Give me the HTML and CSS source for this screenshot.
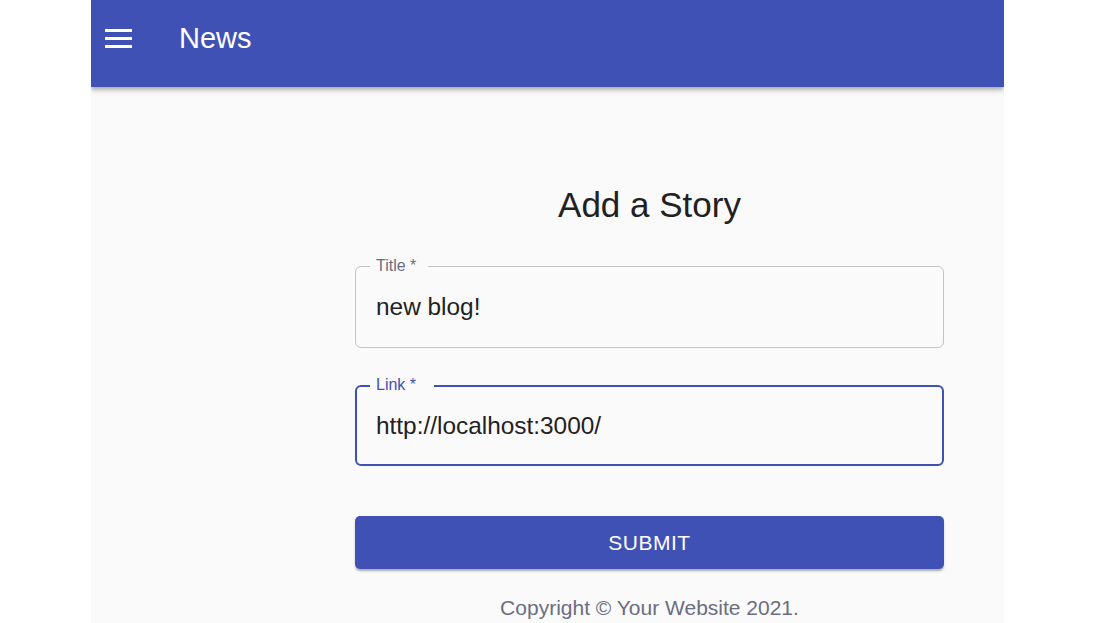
FILE: index.html
```html
<!DOCTYPE html>
<html>
<head>
<meta charset="utf-8">
<link rel="stylesheet" href="styles.css">
</head>
<body>
<div class="frame">
  <header class="appbar">
    <svg class="menu" viewBox="0 0 27 20" width="27" height="20">
      <rect x="0" y="1" width="27" height="3" fill="#fff"/>
      <rect x="0" y="9" width="27" height="3" fill="#fff"/>
      <rect x="0" y="17" width="27" height="3" fill="#fff"/>
    </svg>
    <span class="brand">News</span>
  </header>
  <main class="main">
    <h1 class="heading">Add a Story</h1>
    <div class="field">
      <span class="legend">Title *</span>
      <div class="value">new blog!</div>
    </div>
    <div class="field focused">
      <span class="legend">Link *</span>
      <div class="value">http://localhost:3000/</div>
    </div>
    <button class="submit">SUBMIT</button>
    <p class="copy">Copyright © Your Website 2021.</p>
  </main>
</div>
</body>
</html>
```
FILE: styles.css
```css
html, body {
  margin: 0;
  padding: 0;
  background: #ffffff;
  font-family: "Liberation Sans", Arial, sans-serif;
}
.frame {
  margin-left: 91px;
  width: 913px;
  height: 623px;
  background: #fafafa;
  overflow: hidden;
}
.appbar {
  height: 87px;
  background: #3f51b5;
  display: flex;
  align-items: center;
  padding-left: 14px;
  padding-bottom: 11px;
  box-sizing: border-box;
  box-shadow: 0 2px 4px rgba(0,0,0,0.25), 0 4px 6px rgba(0,0,0,0.12);
  position: relative;
}
.menu {
  display: block;
}
.brand {
  color: #fff;
  font-size: 29px;
  margin-left: 47px;
}
.main {
  margin-left: 264px;
  width: 589px;
  display: flex;
  flex-direction: column;
}
.heading {
  margin: 98px 0 0 0;
  font-weight: 400;
  font-size: 35px;
  line-height: 40px;
  text-align: center;
  color: #212121;
}
.field {
  position: relative;
  margin-top: 41px;
  border: 1px solid #c4c4c8;
  border-radius: 6px;
  height: 82px;
  box-sizing: border-box;
  padding: 0 20px;
  display: flex;
  align-items: center;
}
.field.focused {
  margin-top: 37px;
  height: 81px;
  border: 2px solid #3f51b5;
  padding: 0 19px;
}
.legend {
  position: absolute;
  left: 14px;
  top: -10px;
  font-size: 16px;
  line-height: 18px;
  color: #6b6d80;
  padding: 0 12px 0 6px;
  background: #fafafa;
}
.focused .legend {
  left: 13px;
  top: -11px;
  padding: 0 18px 0 6px;
  color: #3f51b5;
}
.value {
  font-size: 24.4px;
  color: #222;
}
.submit {
  margin-top: 50px;
  height: 53px;
  border: none;
  border-radius: 5px;
  background: #3f51b5;
  color: #fff;
  font-family: "Liberation Sans", Arial, sans-serif;
  font-size: 21px;
  letter-spacing: 0.5px;
  box-shadow: 0 3px 2px -1px rgba(0,0,0,0.2), 0 2px 3px rgba(0,0,0,0.14);
}
.copy {
  margin: 27px 0 0 0;
  text-align: center;
  font-size: 21px;
  line-height: 24px;
  color: #6b6d80;
}
```
